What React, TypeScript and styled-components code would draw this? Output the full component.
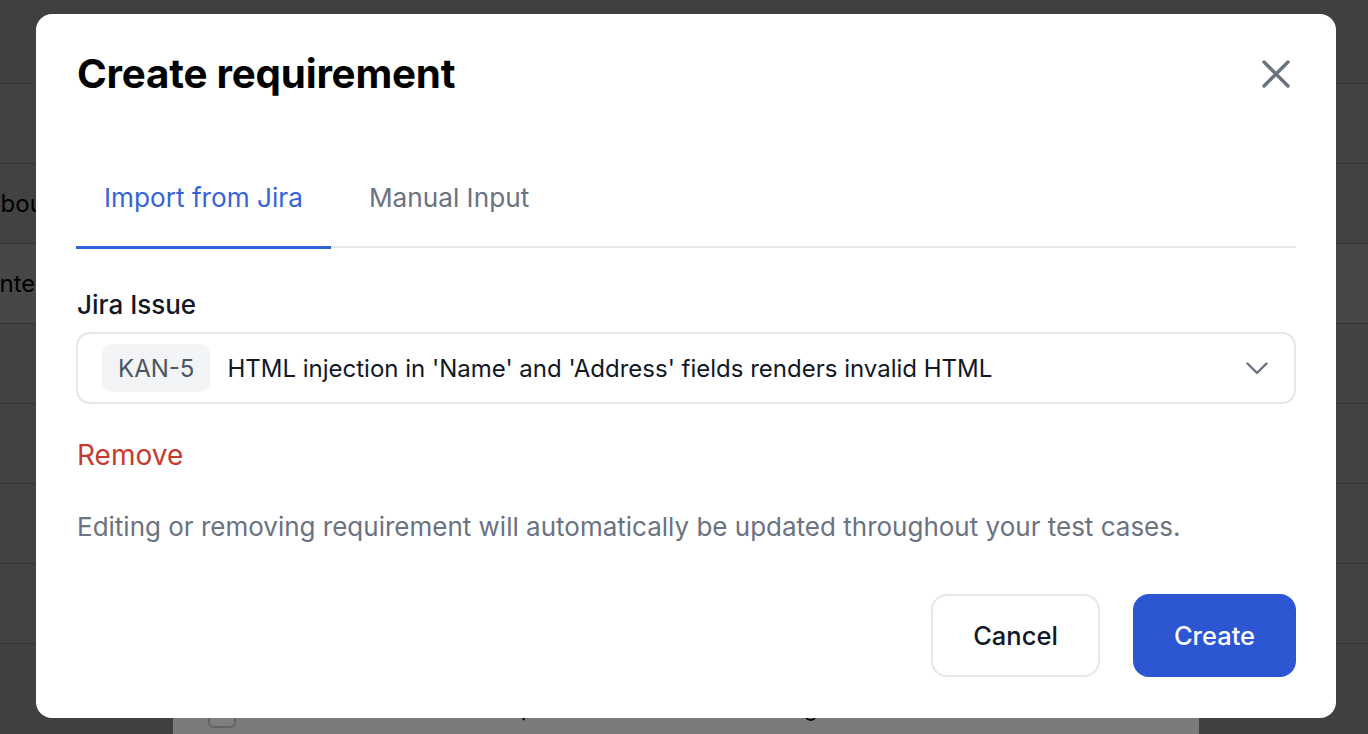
import React from "react";
import styled, { createGlobalStyle } from "styled-components";

const Global = createGlobalStyle`
  html, body { margin: 0; padding: 0; }
  body {
    background: #808080;
    font-family: "Inter", "Noto Sans", "Liberation Sans", sans-serif;
    overflow: hidden;
    width: 1368px;
    height: 734px;
  }
  * { box-sizing: border-box; }
`;

/* ---------- page beneath the dialog ---------- */
const Page = styled.div`
  width: 1368px;
  height: 734px;
  background: #808080;
  display: flex;
  flex-direction: column;
`;

const HeaderRow = styled.div`
  height: 84px;
  border-bottom: 1px solid #6c6c6c;
`;

const Row = styled.div<{ $hl?: boolean }>`
  height: 80px;
  border-bottom: 1px solid #6c6c6c;
  background: ${(p) => (p.$hl ? "#8e8e8e" : "#858585")};
  display: flex;
  align-items: center;
  font-size: 24px;
  color: #000;
`;

const CellText = styled.span<{ $shift: number }>`
  margin-left: ${(p) => -p.$shift}px;
  white-space: nowrap;
`;

const BulkBar = styled.div`
  position: fixed;
  left: 173px;
  top: 672px;
  width: 1026px;
  height: 72px;
  background: #f6f6f6;
  border-radius: 12px;
  display: flex;
  align-items: center;
  padding: 0 35px;
  gap: 24px;
  font-size: 22px;
  color: #000;
`;

const BarCheck = styled.span`
  width: 28px;
  height: 28px;
  border: 2px solid #c8c8c8;
  border-radius: 6px;
  margin-top: 12px;
  background: #fff;
`;

const BarText = styled.span`
  flex: 1;
  text-align: center;
`;

/* ---------- overlay + dialog ---------- */
const Overlay = styled.div`
  position: fixed;
  inset: 0;
  background: rgba(0, 0, 0, 0.5);
  display: flex;
  align-items: flex-start;
  justify-content: center;
  padding: 14px 0 0 4px;
`;

const Dialog = styled.div`
  width: 1300px;
  height: 704px;
  background: #fff;
  border-radius: 16px;
  padding: 36px 40px 41px 41px;
  display: flex;
  flex-direction: column;
`;

const TitleRow = styled.div`
  display: flex;
  align-items: center;
  justify-content: space-between;
  height: 48px;
`;

const Title = styled.h1`
  margin: 0;
  font-size: 40.3px;
  line-height: 48px;
  font-weight: 700;
  color: #000;
  letter-spacing: -0.2px;
`;

const CloseButton = styled.button`
  border: none;
  background: none;
  padding: 0;
  margin-right: 6px;
  width: 28px;
  height: 28px;
  display: flex;
  align-items: center;
  justify-content: center;
  color: #6b7280;
  cursor: pointer;
`;

const TabList = styled.div`
  margin-top: 52px;
  margin-left: -1px;
  display: flex;
  gap: 10px;
  border-bottom: 2px solid #e5e7eb;
`;

const Tab = styled.button<{ $active?: boolean }>`
  border: none;
  background: none;
  font-family: inherit;
  font-size: 26.2px;
  line-height: 32px;
  padding: 32px 28px 32px;
  margin-bottom: -3px;
  border-bottom: 3px solid ${(p) => (p.$active ? "#2f62d6" : "transparent")};
  color: ${(p) => (p.$active ? "#3464d6" : "#6b7280")};
  font-weight: 400;
  cursor: pointer;
`;

const Label = styled.div`
  margin-top: 42px;
  font-size: 26px;
  line-height: 30px;
  font-weight: 500;
  color: #111827;
`;

const Select = styled.div`
  margin-top: 12px;
  margin-left: -1px;
  height: 72px;
  border: 2px solid #e5e7eb;
  border-radius: 14px;
  display: flex;
  align-items: center;
  padding: 0 26px 0 24px;
  gap: 17px;
`;

const Chip = styled.span`
  height: 48px;
  padding: 0 16px;
  border-radius: 10px;
  background: #f3f4f6;
  color: #4b5563;
  font-size: 24px;
  display: flex;
  align-items: center;
`;

const IssueTitle = styled.span`
  flex: 1;
  font-size: 24px;
  color: #111827;
  white-space: nowrap;
`;

const RemoveLink = styled.button`
  align-self: flex-start;
  margin-top: 35px;
  border: none;
  background: none;
  padding: 0;
  font-family: inherit;
  font-size: 28px;
  line-height: 32px;
  color: #c53b2f;
  cursor: pointer;
`;

const Helper = styled.p`
  margin: 41px 0 0;
  font-size: 26px;
  line-height: 30px;
  color: #6b7280;
  white-space: nowrap;
`;

const Footer = styled.div`
  margin-top: auto;
  display: flex;
  justify-content: flex-end;
  gap: 33px;
`;

const Button = styled.button<{ $primary?: boolean }>`
  height: 83px;
  width: ${(p) => (p.$primary ? "163px" : "169px")};
  padding: 0;
  border-radius: 16px;
  font-family: inherit;
  font-size: 25.5px;
  font-weight: 500;
  cursor: pointer;
  border: 2px solid ${(p) => (p.$primary ? "#2d56d3" : "#e5e7eb")};
  background: ${(p) => (p.$primary ? "#2d56d3" : "#fff")};
  color: ${(p) => (p.$primary ? "#fff" : "#111827")};
`;

const CloseIcon = () => (
  <svg width="28" height="28" viewBox="0 0 28 28" fill="none">
    <path d="M2 2 L26 26 M26 2 L2 26" stroke="currentColor" strokeWidth="3.4" strokeLinecap="round" />
  </svg>
);

const Chevron = () => (
  <svg width="22" height="13" viewBox="0 0 22 13" fill="none">
    <path d="M1.5 1.5 L11 11 L20.5 1.5" stroke="#6b7280" strokeWidth="2.4" strokeLinecap="round" strokeLinejoin="round" />
  </svg>
);

export default function App() {
  return (
    <>
      <Global />
      <Page>
        <HeaderRow />
        <Row />
        <Row>
          <CellText $shift={16}>About page</CellText>
        </Row>
        <Row $hl>
          <CellText $shift={7}>Integration</CellText>
        </Row>
        <Row />
        <Row />
        <Row />
        <Row />
      </Page>
      <BulkBar>
        <BarCheck />
        <BarText>Select requirements to bulk edit or tag</BarText>
        <span>Clear selection.</span>
      </BulkBar>
      <Overlay>
        <Dialog role="dialog" aria-label="Create requirement">
          <TitleRow>
            <Title>Create requirement</Title>
            <CloseButton aria-label="Close">
              <CloseIcon />
            </CloseButton>
          </TitleRow>
          <TabList>
            <Tab $active>Import from Jira</Tab>
            <Tab>Manual Input</Tab>
          </TabList>
          <Label>Jira Issue</Label>
          <Select>
            <Chip>KAN-5</Chip>
            <IssueTitle>HTML injection in 'Name' and 'Address' fields renders invalid HTML</IssueTitle>
            <Chevron />
          </Select>
          <RemoveLink>Remove</RemoveLink>
          <Helper>
            Editing or removing requirement will automatically be updated throughout your test cases.
          </Helper>
          <Footer>
            <Button>Cancel</Button>
            <Button $primary>Create</Button>
          </Footer>
        </Dialog>
      </Overlay>
    </>
  );
}
